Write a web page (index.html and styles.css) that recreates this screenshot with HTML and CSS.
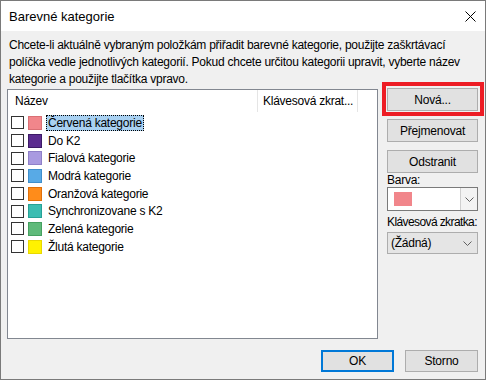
FILE: index.html
```html
<!DOCTYPE html>
<html lang="cs">
<head>
<meta charset="utf-8">
<title>Barevné kategorie</title>
<link rel="stylesheet" href="styles.css">
</head>
<body>
<div class="window">
  <div class="titlebar">
    <span class="title">Barevné kategorie</span>
    <svg class="close" width="11" height="11" viewBox="0 0 11 11"><path d="M0.5 0.5 L10.5 10.5 M10.5 0.5 L0.5 10.5" stroke="#000" stroke-width="1" fill="none"/></svg>
  </div>
  <div class="content">
    <p class="desc">Chcete-li aktuálně vybraným položkám přiřadit barevné kategorie, použijte zaškrtávací<br>políčka vedle jednotlivých kategorií. Pokud chcete určitou kategorii upravit, vyberte název<br>kategorie a použijte tlačítka vpravo.</p>
    <div class="main">
      <div class="list">
        <div class="list-header">
          <div class="col col-name">Název</div>
          <div class="col col-key">Klávesová zkrat...</div>
          <div class="col col-rest"></div>
        </div>
        <div class="rows">
          <div class="row"><span class="chk"></span><span class="sw sw-red"></span><span class="label sel">Červená kategorie</span></div>
          <div class="row"><span class="chk"></span><span class="sw sw-dkpurple"></span><span class="label">Do K2</span></div>
          <div class="row"><span class="chk"></span><span class="sw sw-purple"></span><span class="label">Fialová kategorie</span></div>
          <div class="row"><span class="chk"></span><span class="sw sw-blue"></span><span class="label">Modrá kategorie</span></div>
          <div class="row"><span class="chk"></span><span class="sw sw-orange"></span><span class="label">Oranžová kategorie</span></div>
          <div class="row"><span class="chk"></span><span class="sw sw-teal"></span><span class="label">Synchronizovane s K2</span></div>
          <div class="row"><span class="chk"></span><span class="sw sw-green"></span><span class="label">Zelená kategorie</span></div>
          <div class="row"><span class="chk"></span><span class="sw sw-yellow"></span><span class="label">Žlutá kategorie</span></div>
        </div>
      </div>
      <div class="side">
        <div class="hl"><div class="btn">Nová...</div></div>
        <div class="btn gap">Přejmenovat</div>
        <div class="btn gap">Odstranit</div>
        <div class="lbl lbl-first">Barva:</div>
        <div class="combo combo-color">
          <span class="combo-main"><span class="combo-sw"></span></span>
          <span class="combo-arrow"><svg width="9" height="5" viewBox="0 0 9 5"><path d="M0.5 0.5 L4.5 4.5 L8.5 0.5" stroke="#606060" fill="none"/></svg></span>
        </div>
        <div class="lbl lbl-second">Klávesová zkratka:</div>
        <div class="combo combo-key">
          <span class="combo-text">(Žádná)</span>
          <svg width="9" height="5" viewBox="0 0 9 5"><path d="M0.5 0.5 L4.5 4.5 L8.5 0.5" stroke="#606060" fill="none"/></svg>
        </div>
      </div>
    </div>
    <div class="footer">
      <div class="btn fbtn ok">OK</div>
      <div class="btn fbtn">Storno</div>
    </div>
  </div>
</div>
</body>
</html>
```
FILE: styles.css
```css
* { box-sizing: border-box; }
html, body { margin: 0; padding: 0; }
body {
  width: 486px;
  height: 380px;
  overflow: hidden;
  background: #f0f0f0;
  font-family: "Liberation Sans", Arial, sans-serif;
  font-size: 12px;
  color: #000;
}
.window {
  width: 486px;
  height: 380px;
  border: 1px solid #7a7a7a;
  background: #f0f0f0;
  display: flex;
  flex-direction: column;
}
.titlebar {
  flex: none;
  height: 30px;
  background: #fff;
  display: flex;
  align-items: center;
  justify-content: space-between;
  padding: 0 9px 0 8px;
}
.title { font-size: 13px; }
.close { display: block; }
.content {
  flex: 1;
  display: flex;
  flex-direction: column;
  padding: 6px 6px 5px 6px;
}
.desc {
  margin: 0;
  padding-left: 2px;
  line-height: 17px;
  letter-spacing: -0.25px;
  white-space: nowrap;
}
.main {
  display: flex;
  gap: 9px;
  margin-top: 1px;
  height: 250px;
}
.list {
  width: 371px;
  background: #fff;
  border: 1px solid #828790;
  letter-spacing: -0.25px;
}
.list-header {
  display: flex;
  height: 22px;
}
.col {
  display: flex;
  align-items: center;
  height: 22px;
}
.col-name {
  width: 250px;
  padding-left: 7px;
  border-right: 1px solid #e5e5e5;
}
.col-key {
  width: 100px;
  padding-left: 5px;
  border-right: 1px solid #e5e5e5;
}
.rows { padding-top: 2px; }
.row {
  height: 17.7px;
  display: flex;
  align-items: center;
  padding-left: 3px;
}
.chk {
  width: 13px;
  height: 13px;
  border: 1px solid #333;
  background: #fff;
  flex: none;
}
.sw {
  width: 14px;
  height: 14px;
  margin-left: 4px;
  border: 1px solid;
  flex: none;
}
.sw-red { background: #f1868b; border-color: #d96f74; }
.sw-dkpurple { background: #5b2c8f; border-color: #3c1a66; }
.sw-purple { background: #a99ae0; border-color: #8f80c8; }
.sw-blue { background: #58aae6; border-color: #3f8fcc; }
.sw-orange { background: #ff8c1a; border-color: #e0700a; }
.sw-teal { background: #3bbdb2; border-color: #27a196; }
.sw-green { background: #5fba7a; border-color: #46a060; }
.sw-yellow { background: #fff200; border-color: #e8d800; }
.label {
  margin-left: 4px;
  padding: 0 2px;
  line-height: 16px;
  white-space: nowrap;
}
.label.sel {
  background: #a9d1f2;
  outline: 1px dotted #000;
  outline-offset: -1px;
}
.side {
  width: 91px;
  display: flex;
  flex-direction: column;
  margin-top: -1px;
}
.btn {
  height: 23px;
  border: 1px solid #adadad;
  background: #e1e1e1;
  display: flex;
  align-items: center;
  justify-content: center;
  letter-spacing: -0.2px;
  white-space: nowrap;
}
.btn.gap { margin-top: 8px; }
.hl { position: relative; }
.hl::after {
  content: "";
  position: absolute;
  top: -6px;
  left: -5px;
  right: -6px;
  bottom: -5px;
  border: 4px solid #ed1c24;
}
.lbl {
  line-height: 14px;
  letter-spacing: -0.25px;
  white-space: nowrap;
}
.lbl-first { margin-top: 0; margin-bottom: 0; }
.lbl-second {
  margin-top: 4px;
  margin-bottom: 3px;
  letter-spacing: -0.6px;
}
.combo {
  display: flex;
  align-items: stretch;
}
.combo-color {
  height: 24px;
  border: 1px solid #7a7a7a;
  background: #fff;
}
.combo-main {
  flex: 1;
  display: flex;
  align-items: center;
  padding-left: 6px;
}
.combo-sw {
  width: 18px;
  height: 14px;
  background: #f1868b;
}
.combo-arrow {
  width: 17px;
  border-left: 1px solid #cfcfcf;
  background: #f3f3f3;
  display: flex;
  align-items: center;
  justify-content: center;
}
.combo-key {
  height: 22px;
  border: 1px solid #adadad;
  background: #e5e5e5;
  align-items: center;
  justify-content: space-between;
  padding: 0 5px 0 3px;
  letter-spacing: -0.25px;
}
.footer {
  display: flex;
  justify-content: flex-end;
  gap: 11px;
  margin-top: 11px;
  padding-right: 1px;
}
.fbtn {
  width: 73px;
  height: 22px;
}
.fbtn.ok { border: 2px solid #0078d7; }
```
